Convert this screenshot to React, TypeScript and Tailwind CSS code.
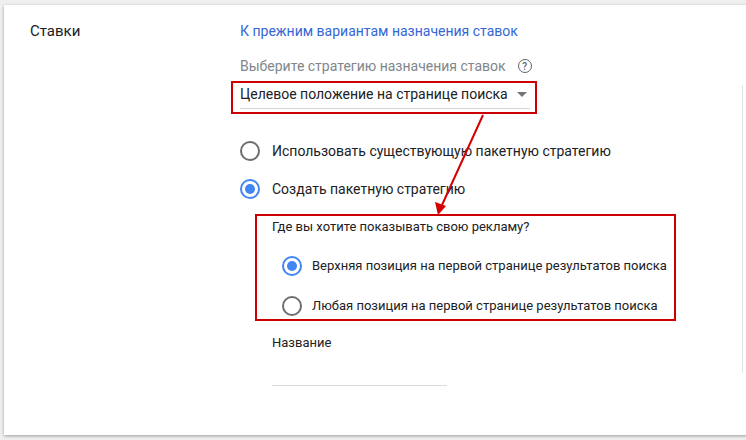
import React from "react";

type RadioProps = {
  checked?: boolean;
  label: string;
  small?: boolean;
};

const Radio = ({ checked, label, small }: RadioProps) => (
  <div className="flex items-center h-[20px]">
    <span
      className={
        checked
          ? "w-[20px] h-[20px] rounded-full border-2 border-[#4285f4] flex items-center justify-center shrink-0"
          : "w-[20px] h-[20px] rounded-full border-2 border-[#6e6e6e] shrink-0"
      }
    >
      {checked && <span className="w-[10px] h-[10px] rounded-full bg-[#4285f4]" />}
    </span>
    <span
      className={
        small
          ? "ml-[10px] text-[13px] leading-[20px] text-[#202124] whitespace-nowrap"
          : "ml-[12px] text-[14px] leading-[20px] text-[#202124] whitespace-nowrap"
      }
    >
      {label}
    </span>
  </div>
);

export default function App() {
  return (
    <div className="relative w-[746px] h-[440px] overflow-hidden bg-[#efefef] font-['Roboto','Liberation_Sans',sans-serif]">
      <div className="ml-[4px] mt-[5px] w-[800px] h-[430px] bg-white shadow-[0_1px_3px_rgba(0,0,0,0.35)] flex">
        <div className="w-[236px] pl-[26px] pt-[16px] text-[15px] leading-[20px] text-[#202124]">
          Ставки
        </div>

        <div className="flex flex-col items-start pt-[16px]">
          <a className="text-[14px] leading-[20px] text-[#3367d6] whitespace-nowrap">
            К прежним вариантам назначения ставок
          </a>

          <div className="mt-[15px] flex items-center h-[20px] text-[14px] text-[#80868b] whitespace-nowrap">
            Выберите стратегию назначения ставок
            <span className="ml-[12px] w-[14px] h-[14px] rounded-full border-[1.5px] border-[#5f6368] flex items-center justify-center text-[10px] font-medium text-[#5f6368]">
              ?
            </span>
          </div>

          <div className="mt-[5px] -ml-[9px] w-[306px] border-2 border-[#cc0000] pl-[7px] pr-[5px] pt-[1px] pb-[3px]">
            <div className="flex items-center h-[20px] text-[14px] text-[#202124] whitespace-nowrap">
              Целевое положение на странице поиска
              <span className="ml-[9px] w-0 h-0 border-l-[5px] border-r-[5px] border-t-[5px] border-l-transparent border-r-transparent border-t-[#757575]" />
            </div>
            <div className="mt-[4px] h-px bg-[#d6d6d6]" />
          </div>

          <div className="mt-[27px]">
            <Radio label="Использовать существующую пакетную стратегию" />
          </div>
          <div className="mt-[18px]">
            <Radio checked label="Создать пакетную стратегию" />
          </div>

          <div className="mt-[15px] ml-[15px] w-[421px] border-2 border-[#cc0000] pl-[15px] pt-[2px] pb-[3px]">
            <div className="text-[13px] leading-[18px] text-[#202124] whitespace-nowrap">
              Где вы хотите показывать свою рекламу?
            </div>
            <div className="mt-[20px] pl-[10px]">
              <Radio checked small label="Верхняя позиция на первой странице результатов поиска" />
            </div>
            <div className="mt-[20px] pl-[10px]">
              <Radio small label="Любая позиция на первой странице результатов поиска" />
            </div>
          </div>

          <div className="mt-[13px] ml-[32px] text-[13px] leading-[18px] text-[#202124]">
            Название
          </div>
          <div className="mt-[33px] ml-[32px] w-[175px] h-px bg-[#dcdcdc]" />
        </div>
      </div>

      <div className="absolute left-[742px] top-[85px] w-px h-[288px] bg-[#e3e3e3]" />

      <svg className="absolute inset-0 pointer-events-none" width="746" height="440">
        <line x1="483" y1="115" x2="442" y2="205" stroke="#d40000" strokeWidth="2" />
        <polygon points="438,215 435,202 446,206" fill="#d40000" />
      </svg>
    </div>
  );
}
